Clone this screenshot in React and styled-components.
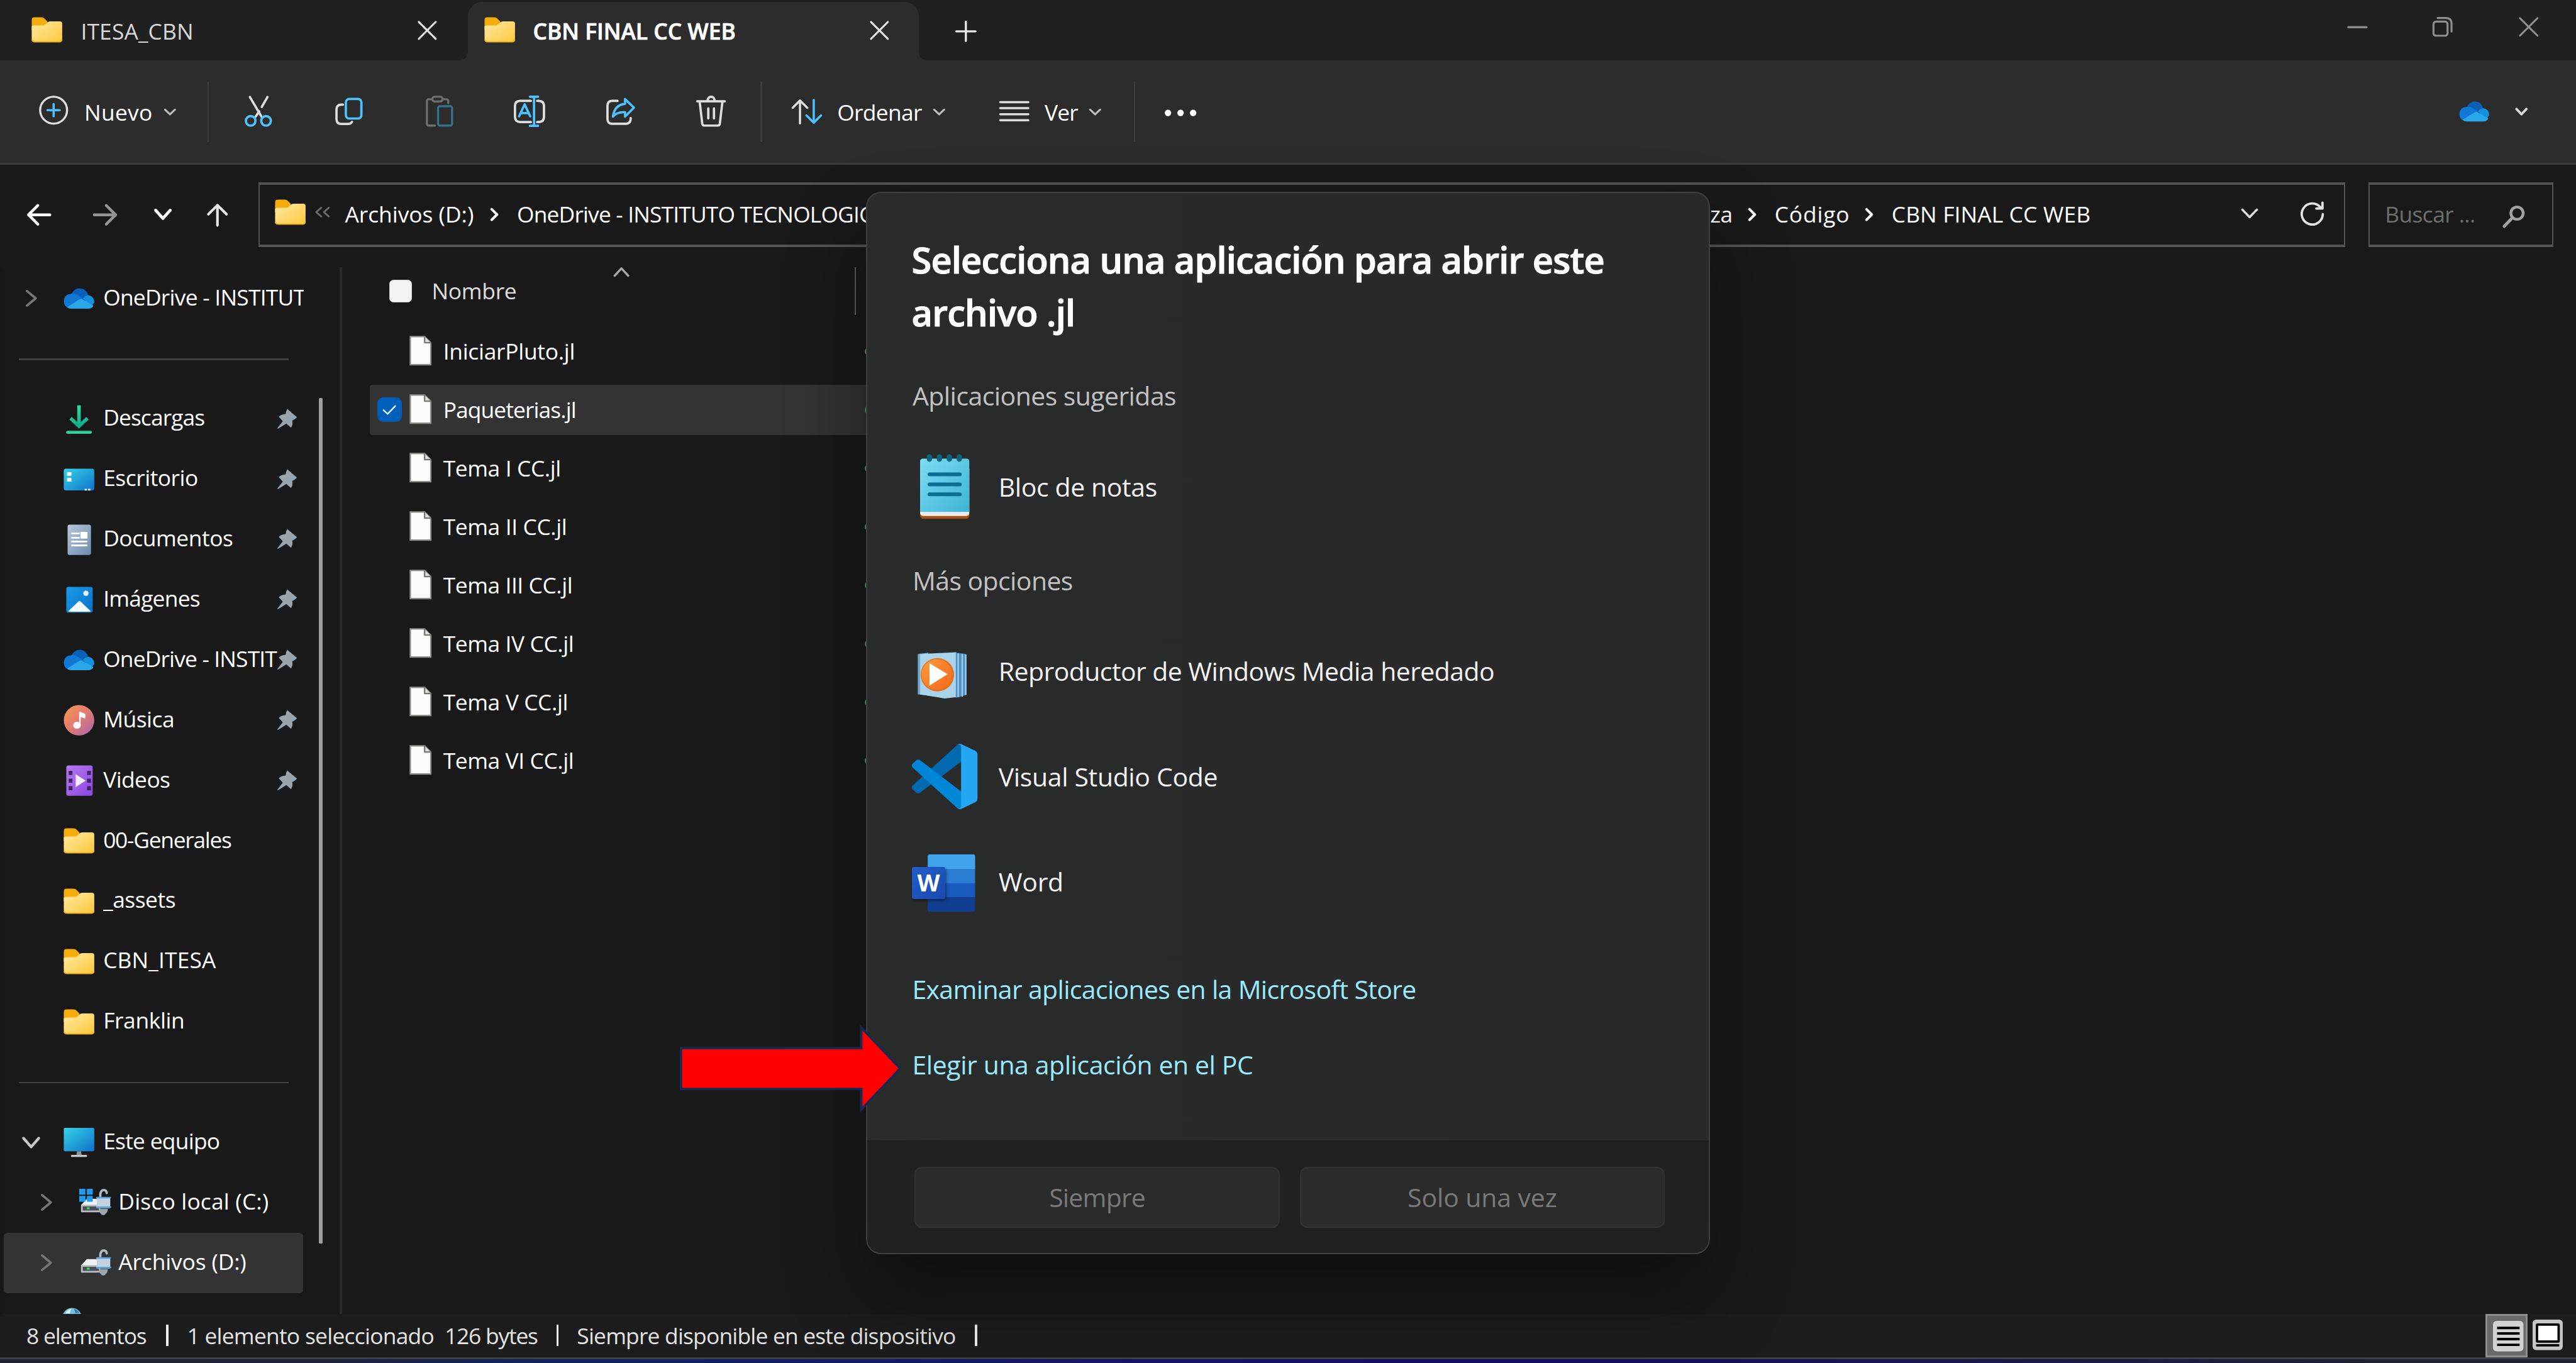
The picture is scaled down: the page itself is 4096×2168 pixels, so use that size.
import React from 'react';
import styled, { createGlobalStyle, css } from 'styled-components';

/* 1rem = 100 design pixels of the 4400px wide layout */
const r = (n) => `${n / 100}rem`;

const GlobalStyle = createGlobalStyle`
  html { font-size: 93.0909px; }
  body { margin: 0; background: #191919; overflow: hidden; }
  *, *::before, *::after { box-sizing: border-box; }
`;

const Window = styled.div`
  position: relative;
  display: flex;
  flex-direction: column;
  width: 100vw;
  height: 100vh;
  overflow: hidden;
  background: #191919;
  color: #fff;
  font-family: "Open Sans", "Noto Sans", sans-serif;
`;

const Text = styled.span`
  flex: none;
  display: block;
  width: ${(p) => (p.$w ? r(p.$w) : 'auto')};
  margin-left: ${(p) => r(p.$ml || 0)};
  margin-top: ${(p) => r((p.$dy || 0) * 2)};
  font-size: ${(p) => r(p.$size || 38)};
  font-weight: ${(p) => p.$weight || 400};
  letter-spacing: ${(p) => r(p.$ls || 0)};
  line-height: 1.4;
  white-space: pre;
  color: ${(p) => p.$color || '#fff'};
`;

const StrongText = styled(Text)`
  font-weight: 600;
  -webkit-text-stroke: ${r(0.8)} currentColor;
`;

const Svg = styled.svg`
  flex: none;
  display: block;
  width: ${(p) => r(p.$w)};
  height: ${(p) => r(p.$h)};
  margin-left: ${(p) => r(p.$ml || 0)};
  margin-top: ${(p) => r((p.$dy || 0) * 2)};
  overflow: visible;
  fill: none;
  stroke-linecap: round;
  stroke-linejoin: round;
`;

const Icon = ({ w, h, ml, dy, children }) => (
  <Svg $w={w} $h={h} $ml={ml} $dy={dy} viewBox={`0 0 ${w} ${h}`}>{children}</Svg>
);

/* ---------- shared glyphs ---------- */

const Folder = (p) => (
  <Icon w={53} h={44} {...p}>
    <path d="M0.5 5Q0.5 0.5 5 0.5H17Q20 0.5 22 2.5L27 7.5V22H0.5Z" fill="#f5ad0c" />
    <path d="M0.5 17Q0.5 14.5 4 14.5H19Q22 14.5 24 12.5L27 9.5Q29 7.5 32 7.5H48.5Q52.5 7.5 52.5 11.5V38Q52.5 43 48 43H5Q0.5 43 0.5 38Z" fill="url(#folderFace)" />
    <path d="M1 39.5Q2 42.5 5.500 42.500H48Q51 42.500 52 39.500" stroke="#eeaa1d" strokeWidth="2" />
  </Icon>
);

const Cloud = ({ w = 53, h = 36, ...p }) => (
  <Svg $w={w} $h={h} $ml={p.ml} $dy={p.dy} viewBox="0 0 53 36" preserveAspectRatio="none">
    <path d="M13 11Q18 0.5 28 0.500Q38 0.500 42 12L36 20L20 14Z" fill="#0a5fb8" />
    <path d="M13 10Q20 8.500 26 13.500L34 19L8 34Q0.500 31 0.500 22.500Q1 11 13 10Z" fill="#0f78d4" />
    <path d="M33 18Q37 12.500 43 12.500Q52.500 14 52.500 25L47 32Z" fill="#1490df" />
    <path d="M6 33L27 19.500Q30 18 33 19.500L51 30Q49 35.500 42 35.500H13Q9 35.500 6 33Z" fill="#28a8ea" />
  </Svg>
);

const Close = ({ s = 33, color = '#e4e4e4', ...p }) => (
  <Icon w={s} h={s} {...p}>
    <path d={`M2 2L${s - 2} ${s - 2}M${s - 2} 2L2 ${s - 2}`} stroke={color} strokeWidth="3.200" />
  </Icon>
);

const ChevronDown = ({ w = 20, h = 11, color = '#bdbdbd', sw = 3.4, ...p }) => (
  <Icon w={w} h={h} {...p}>
    <path d={`M1.500 1.500L${w / 2} ${h - 1.5}L${w - 1.5} 1.500`} stroke={color} strokeWidth={sw} />
  </Icon>
);

const ChevronRight = ({ w = 13, h = 22, color = '#fff', sw = 4.4, ...p }) => (
  <Icon w={w} h={h} {...p}>
    <path d={`M2 2L${w - 2} ${h / 2}L2 ${h - 2}`} stroke={color} strokeWidth={sw} />
  </Icon>
);

/* ---------- tab bar ---------- */

const TabBar = styled.div`
  flex: none;
  display: flex;
  align-items: stretch;
  height: ${r(103)};
  background: #202020;
`;

const Tab = styled.div`
  position: relative;
  flex: none;
  display: flex;
  align-items: center;
  width: ${(p) => r(p.$w)};
  padding-left: ${(p) => r(p.$pl)};
  ${(p) => p.$active && css`
    margin-top: ${r(3)};
    padding-bottom: ${r(3)};
    background: #2c2c2c;
    border-radius: ${r(25)} ${r(25)} 0 0;
    &::before, &::after {
      content: "";
      position: absolute;
      bottom: 0;
      width: ${r(14)};
      height: ${r(14)};
    }
    &::before {
      left: ${r(-14)};
      background: radial-gradient(circle at 0 0, transparent 70%, #2c2c2c 72%);
    }
    &::after {
      right: ${r(-14)};
      background: radial-gradient(circle at 100% 0, transparent 70%, #2c2c2c 72%);
    }
  `}
`;

const NewTab = styled.div`
  display: flex;
  align-items: center;
  margin-left: ${r(64)};
`;

const Controls = styled.div`
  display: flex;
  align-items: center;
  margin-left: auto;
  padding-right: ${r(63.5)};
  padding-bottom: ${r(12)};
`;

/* ---------- command bar ---------- */

const Toolbar = styled.div`
  flex: none;
  display: flex;
  align-items: center;
  height: ${r(178)};
  background: #2c2c2c;
  border-bottom: ${r(4)} solid #3b3b3b;
`;

const ToolButton = styled.div`
  flex: none;
  display: flex;
  align-items: center;
  justify-content: center;
  width: ${r(154.5)};
`;

const ToolGroup = styled.div`
  flex: none;
  display: flex;
  align-items: center;
  width: ${(p) => r(p.$w)};
  padding-left: ${(p) => r(p.$pl)};
`;

const ToolSeparator = styled.div`
  flex: none;
  width: ${r(3)};
  height: ${r(102)};
  background: #3e3e3e;
`;

const Account = styled.div`
  display: flex;
  align-items: center;
  margin-left: auto;
  padding-right: ${r(83.5)};
`;

const W = '#dedede';
const B = '#4cc2ff';

const ToolIcons = [
  <g key="cut" strokeWidth="4">
    <path d="M12.200 2.500L32 36M42.200 2.500L32.500 19.500M28 27L22 36" stroke={W} />
    <circle cx="13.500" cy="43.300" r="8.200" stroke={B} />
    <circle cx="39.800" cy="43.300" r="8.200" stroke={B} />
  </g>,
  <g key="copy" strokeWidth="4">
    <path d="M17.500 15.500H15Q6.500 15.500 6.500 24V40Q6.500 48.500 15 48.500H26Q31 48.500 33 45" stroke={W} />
    <rect x="22.500" y="5.700" width="26.500" height="33.500" rx="6" stroke={B} />
  </g>,
  <g key="paste" strokeWidth="3.600">
    <path d="M15 6.300H9.500Q6.300 6.300 6.300 9.500V48Q6.300 51.300 9.500 51.300H20M33 6.300H39Q42.700 6.300 42.700 9.500V13" stroke="#6e6e6e" />
    <rect x="15.500" y="2" width="17.500" height="8" rx="4" stroke="#6e6e6e" />
    <rect x="25.300" y="18.300" width="24" height="33" rx="3" stroke="#35708f" />
  </g>,
  <g key="rename" strokeWidth="4">
    <path d="M29 9H11Q2 9 2 18V36Q2 45.300 11 45.300H29M40 9H42Q51.500 9 51.500 18V36Q51.500 45.300 42 45.300H40" stroke={W} />
    <path d="M34.500 2V51.700M27.500 2H41.500M27.500 51.700H41.500" stroke={B} />
    <path d="M9 35.500L18.500 15L28 35.500M12.500 30H24.500" stroke={B} />
  </g>,
  <g key="share" strokeWidth="4">
    <path d="M22.500 9H13.500Q5.300 9 5.300 17.500V40Q5.300 48.300 13.500 48.300H37Q45 48.300 45 38.500" stroke={W} />
    <path d="M35.300 6V14Q17 16 14.700 36Q22 27.500 35.300 28.500V36L50.500 20.700Z" stroke={B} />
  </g>,
  <g key="trash" strokeWidth="4">
    <path d="M4 9.700H51M21.500 9Q22.500 2 27.600 2Q32.700 2 33.700 9M8 10L12.500 48Q13 51.300 16 51.300H39Q42 51.300 42.500 48L47 10M22.800 22V39M32.500 22V39" stroke={W} />
  </g>,
];

/* ---------- address row ---------- */

const AddressRow = styled.div`
  flex: none;
  display: flex;
  align-items: flex-start;
  height: ${r(176)};
  padding-top: ${r(31)};
`;

const NavButtons = styled.div`
  flex: none;
  display: flex;
  align-items: center;
  width: ${r(442)};
  height: ${r(110)};
  padding-left: ${r(46)};
`;

const Field = styled.div`
  flex: none;
  display: flex;
  align-items: center;
  width: ${(p) => r(p.$w)};
  height: ${r(110)};
  margin-right: ${(p) => r(p.$mr || 0)};
  border: solid #535353;
  border-width: ${r(5)} ${r(3)};
`;

const Trail = styled.div`
  flex: none;
  display: flex;
  align-items: center;
  justify-content: space-between;
  width: ${r(2074)};
  margin-left: ${r(32)};
`;

/* ---------- body ---------- */

const Body = styled.div`
  flex: 1;
  display: flex;
  min-height: 0;
`;

const Sidebar = styled.div`
  flex: none;
  display: flex;
  width: ${r(584)};
  border-left: ${r(6)} solid #161616;
  border-right: ${r(5)} solid #2b2b2b;
`;

const NavList = styled.div`
  width: ${r(514)};
  padding-top: ${r(1.5)};
  overflow: hidden;
`;

const NavRow = styled.div`
  display: flex;
  align-items: center;
  height: ${r(103)};
  margin: 0 ${r(2)} 0 ${r(1.5)};
  padding-left: ${(p) => r(p.$depth ? 26 : 0)};
  border-radius: ${r(6)};
  background: ${(p) => (p.$selected ? '#333' : 'transparent')};
`;

const Expander = styled.div`
  flex: none;
  display: flex;
  justify-content: center;
  width: ${r(102)};
  padding-right: ${r(9)};
`;

const IconSlot = styled.div`
  flex: none;
  display: flex;
  justify-content: center;
  width: ${r(53)};
  margin-right: ${r(14.5)};
`;

const NavLabel = styled(Text)`
  width: ${r(290)};
  margin-top: ${r(-5)};
`;

const NavRule = styled.div`
  display: flex;
  align-items: center;
  height: ${r(103)};
  padding: ${r(2)} ${r(26)} 0 ${r(27)};
  &::after {
    content: "";
    flex: 1;
    height: ${r(2.5)};
    background: #404040;
  }
`;

const ScrollThumb = styled.div`
  width: ${r(6.5)};
  height: ${r(1445)};
  margin: ${r(223)} 0 0 ${r(25)};
  border-radius: ${r(2)};
  background: #9f9f9f;
`;

const Pin = () => (
  <Icon w={35} h={35} ml={6.5} dy={-0.5}>
    <path d="M18 0.500L34.500 14.500Q33 17 26.500 20.500Q28 27 24.500 32.500L16.500 25.500L2 34.500L1 33.500L10.500 21.500L3.500 14Q8 9.500 15 9.500Q16 4 18 0.500Z" fill="#9aa4ac" />
  </Icon>
);

const Drive = ({ system }) => (
  <Icon w={53} h={46}>
    {system && <path d="M0 0H10.500V10H0ZM13 0H23V10H13Z" fill="#1e9df1" />}
    <path d="M13 17H36V28H3Z" fill="#f1f1f3" />
    {system && <path d="M0 12H10.500V22H0ZM13 12H23V22H13Z" fill="#1e9df1" />}
    <path d="M3 27H36V39Q36 40 35 40H4Q3 40 3 39Z" fill="#b9bcc0" />
    <path d="M6 30H34V37H6Z" fill="#4b4f54" />
    <rect x="13" y="31.500" width="4.500" height="3.500" fill="#2ee65c" />
    <path d="M36 15V9Q37 2 42 2Q46 2 47 7" stroke="#b2b7bd" strokeWidth="4" />
    <rect x="30" y="14" width="23" height="19" rx="1.500" fill="#c3d2de" />
    <path d="M30 15H53M30 31.500H53" stroke="#53a4e2" strokeWidth="2.600" />
    <path d="M33 34H49Q48 43 41 45Q34 43 33 34Z" fill="#9da7b1" />
  </Icon>
);

const navIcons = {
  onedrive: <Cloud />,
  folder: <Folder />,
  downloads: (
    <Icon w={40} h={52}>
      <path d="M20 3V37M5.500 25L20 38.500L34.500 25" stroke="url(#teal)" strokeWidth="6" strokeLinecap="butt" strokeLinejoin="miter" />
      <path d="M0.500 49H39.500" stroke="#2fd39a" strokeWidth="5" />
    </Icon>
  ),
  desktop: (
    <Icon w={53} h={38}>
      <rect x="0.500" y="0.500" width="52" height="37" rx="3.500" fill="url(#cyanBlue)" />
      <path d="M6 6.500H13.500V12.500H6ZM6 16.500H13.500V22.500H6Z" fill="#fff" />
      <path d="M36 35H40V38H36ZM42 35H46V38H42Z" fill="#e9f6ff" />
    </Icon>
  ),
  documents: (
    <Icon w={41} h={53}>
      <rect x="0.500" y="0.500" width="40" height="52" rx="3.500" fill="url(#slate)" />
      <path d="M8 15.500H20M8 23H20M8 29.500H33M8 36H33" stroke="#fff" strokeWidth="3" />
      <rect x="22.500" y="13" width="12" height="11.500" rx="1" fill="#fff" />
    </Icon>
  ),
  pictures: (
    <Icon w={46} h={45}>
      <rect x="0.500" y="0.500" width="45" height="44" rx="3.500" fill="url(#azure)" />
      <path d="M4 42L20 26.500Q23 23.500 26 26.500L42 42Q42 43 40 43H6Q4 43 4 42Z" fill="#f4fbff" />
      <circle cx="34" cy="11.500" r="4.500" fill="#e7f5ff" />
    </Icon>
  ),
  music: (
    <Icon w={53} h={53}>
      <circle cx="26.500" cy="26.500" r="26" fill="url(#coral)" />
      <path d="M28 34V13L36 16.500V22L28 19" fill="#fff" stroke="#fff" strokeWidth="2.500" />
      <ellipse cx="23" cy="35" rx="6.500" ry="6" fill="#fff" />
    </Icon>
  ),
  videos: (
    <Icon w={46} h={53}>
      <rect x="0.500" y="0.500" width="45" height="52" rx="3.500" fill="url(#violet)" />
      <path d="M4.500 10H11V17H4.500ZM4.500 23H11V30H4.500ZM4.500 36H11V43H4.500ZM36 10H42.500V17H36ZM36 23H42.500V30H36ZM36 36H42.500V43H36Z" fill="#3f2463" />
      <path d="M16.500 15.500L33.500 26.500L16.500 37.500Z" fill="#f3ecff" />
    </Icon>
  ),
  pc: (
    <Icon w={53} h={50}>
      <path d="M23 40H30L31 47H22Z" fill="#8b949c" />
      <rect x="0.500" y="0" width="52" height="40" rx="2" fill="url(#cyanBlue)" />
      <path d="M14.500 48H38.500" stroke="#c4cacf" strokeWidth="3.500" />
    </Icon>
  ),
  driveC: <Drive system />,
  driveD: <Drive />,
  network: (
    <Icon w={53} h={53}>
      <circle cx="14.500" cy="17" r="16.500" fill="#6fbde0" />
      <path d="M3 9Q8 2 14 1.500Q11 6 11 10Z" fill="#d8f1fb" />
      <path d="M18 1.500Q24 4 27 9H20Z" fill="#2f7fae" />
    </Icon>
  ),
};

const navItems = [
  { icon: 'onedrive', label: 'OneDrive - INSTITUT', ls: -0.8, expand: 'right' },
  null,
  { icon: 'downloads', label: 'Descargas', ls: -0.95, pin: true },
  { icon: 'desktop', label: 'Escritorio', ls: -0.5, pin: true },
  { icon: 'documents', label: 'Documentos', ls: -0.46, pin: true },
  { icon: 'pictures', label: 'Imágenes', ls: -0.8, pin: true },
  { icon: 'onedrive', label: 'OneDrive - INSTIT', ls: -0.9, pin: true },
  { icon: 'music', label: 'Música', ls: -0.5, pin: true },
  { icon: 'videos', label: 'Videos', ls: -0.6, pin: true },
  { icon: 'folder', label: '00-Generales', ls: -1.35 },
  { icon: 'folder', label: '_assets', ls: -0.5 },
  { icon: 'folder', label: 'CBN_ITESA', ls: 0.17 },
  { icon: 'folder', label: 'Franklin', ls: -0.39 },
  null,
  { icon: 'pc', label: 'Este equipo', ls: -0.77, expand: 'down' },
  { icon: 'driveC', label: 'Disco local (C:)', ls: 0.2, expand: 'right', depth: 1 },
  { icon: 'driveD', label: 'Archivos (D:)', ls: -0.15, expand: 'right', depth: 1, selected: true },
  { icon: 'network' },
];

const NavItem = ({ icon, label, ls, pin, expand, depth, selected }) => (
  <NavRow $depth={depth} $selected={selected}>
    <Expander>
      {expand === 'right' && <ChevronRight w={19} h={29} color="#757575" sw={4} />}
      {expand === 'down' && <ChevronDown w={29} h={18} color="#c8c8c8" sw={4.6} />}
    </Expander>
    <IconSlot>{navIcons[icon]}</IconSlot>
    {label && <NavLabel $ls={ls}>{label}</NavLabel>}
    {pin && <Pin />}
  </NavRow>
);

/* ---------- file list ---------- */

const Files = styled.div`
  flex: 1;
  display: flex;
  flex-direction: column;
  padding-left: ${r(48)};
`;

const HeaderRow = styled.div`
  display: flex;
  align-items: flex-start;
  height: ${r(93)};
  margin-bottom: ${r(7.5)};
  padding-left: ${r(33)};
`;

const HeaderCheck = styled.div`
  flex: none;
  width: ${r(39)};
  height: ${r(39)};
  margin-top: ${r(21)};
  border-radius: ${r(7)};
  background: #f3f3f3;
  border: ${r(2)} solid #d0d0d0;
`;

const ColumnEdge = styled.div`
  width: ${r(3)};
  height: ${r(81)};
  margin-left: ${r(385)};
  background: #5c5c5c;
`;

const FileRow = styled.div`
  display: flex;
  align-items: center;
  width: ${r(1400)};
  height: ${r(86)};
  margin-bottom: ${r(13.93)};
  border-radius: ${r(5)};
  background: ${(p) => (p.$selected ? '#333' : 'transparent')};
`;

const CheckSlot = styled.div`
  flex: none;
  width: ${r(67)};
  padding-left: ${r(12.5)};
`;

const CheckBox = styled.div`
  display: flex;
  align-items: center;
  justify-content: center;
  width: ${r(42)};
  height: ${r(42)};
  border-radius: ${r(10)};
  background: #005fb8;
`;

const SyncMark = styled.span`
  width: ${r(30)};
  height: ${r(16)};
  margin-left: ${r(520.5)};
  border-radius: ${r(8)};
  border: ${r(3)} solid #4b9a55;
`;

const FilePage = () => (
  <Icon w={38} h={51} dy={-1}>
    <path d="M1.500 1.500H26L36.500 12V49.500H1.500Z" fill="#fcfcfc" stroke="#8f8f8a" strokeWidth="2.400" strokeLinejoin="miter" />
    <path d="M26 1.500V12H36.500" fill="#dedede" stroke="#77776f" strokeWidth="2.400" />
  </Icon>
);

const files = [
  ['IniciarPluto.jl', -0.28],
  ['Paqueterias.jl', -0.95],
  ['Tema I CC.jl', -0.4],
  ['Tema II CC.jl', -0.4],
  ['Tema III CC.jl', -0.45],
  ['Tema IV CC.jl', -0.42],
  ['Tema V CC.jl', -0.4],
  ['Tema VI CC.jl', -0.42],
];

/* ---------- status bar ---------- */

const StatusBar = styled.div`
  flex: none;
  display: flex;
  align-items: center;
  height: ${r(74)};
  padding-left: ${r(45)};
  background: #1c1c1c;
`;

const StatusRule = styled.div`
  flex: none;
  width: ${r(3.5)};
  height: ${r(37)};
  background: #f0f0f0;
`;

const ViewSwitch = styled.div`
  display: flex;
  align-items: flex-start;
  height: 100%;
  margin-left: auto;
  padding-right: ${r(22.5)};
`;

const ActiveView = styled.div`
  display: flex;
  width: ${r(72)};
  height: ${r(74)};
  margin-right: ${r(9)};
  padding: ${r(9)} 0 0 ${r(10)};
  background: #6a6a6a;
  border: ${r(3.5)} solid #8e8e8e;
`;

const BottomEdge = styled.div`
  flex: none;
  height: ${r(10)};
  border-top: ${r(4)} solid #3b3e47;
  background: linear-gradient(90deg, #1b2330 0, #1a2438 12%, #10235a 20%, #101a66 36%, #120f62 60%, #141a48 78%, #1a2233 92%);
`;

/* ---------- dialog ---------- */

const Dialog = styled.div`
  position: absolute;
  left: ${r(1479)};
  top: ${r(328)};
  display: flex;
  flex-direction: column;
  width: ${r(1442)};
  height: ${r(1815)};
  border: ${r(3)} solid #3f3f3f;
  border-radius: ${r(26)};
  background: #292a2a;
  box-shadow: 0 ${r(70)} ${r(130)} rgba(0, 0, 0, 0.42);
  overflow: hidden;
`;

const DialogBody = styled.div`
  flex: 1;
  padding: ${r(68)} ${r(78)} 0;
  background: linear-gradient(90deg, #292c2a 0, #292a2a 22%, #2a2929 100%);
`;

const Title = styled.h1`
  margin: 0 0 ${r(68)} ${r(-2)};
  width: ${r(1290)};
  font-size: ${r(62)};
  font-weight: 600;
  line-height: ${r(90.5)};
  letter-spacing: ${r(-0.9)};
  white-space: pre-line;
  -webkit-text-stroke: ${r(1.2)} currentColor;
`;

const GroupLabel = styled(Text)`
  height: ${r(60)};
  margin-bottom: ${r(34.5)};
  margin-left: ${r(-0.5)};
  line-height: ${r(60)};
`;

const AppList = styled.div`
  display: flex;
  flex-direction: column;
  margin: 0 0 ${(p) => r(p.$gap)} ${r(-2)};
`;

const AppRow = styled.div`
  display: flex;
  align-items: center;
  height: ${r(179.9)};
`;

const LinkRow = styled(Text)`
  height: ${r(129)};
  line-height: ${r(129)};
  margin-left: ${r(-1)};
`;

const DialogFooter = styled.div`
  display: flex;
  gap: ${r(34)};
  height: ${r(192)};
  padding: ${r(43)} ${r(75)} 0 ${r(81)};
  background: #212121;
  border-top: ${r(3)} solid #1d1d1d;
`;

const DialogButton = styled.div`
  flex: 1;
  display: flex;
  align-items: center;
  justify-content: center;
  height: ${r(104)};
  border: ${r(3)} solid #323232;
  border-radius: ${r(13)};
  background: #2b2b2b;
`;

const Pointer = styled.svg`
  position: absolute;
  left: ${r(1160)};
  top: ${r(1748)};
  width: ${r(380)};
  height: ${r(156)};
`;

const Notepad = () => (
  <Icon w={112} h={112}>
    <rect x="14" y="20" width="84" height="91" rx="6" fill="#a84f12" />
    <rect x="14" y="20" width="84" height="86" rx="5" fill="#ececec" />
    <path d="M14 13Q14 8 19 8H93Q98 8 98 13V99H14Z" fill="url(#notepad)" />
    <path d="M30 35H82M30 52H82M30 69H82" stroke="#0b6f92" strokeWidth="6.500" />
    <path d="M30 5V9M47 5V9M64 5V9M81 5V9" stroke="#0b6480" strokeWidth="9" />
  </Icon>
);

const MediaPlayer = () => (
  <Icon w={112} h={112}>
    <path d="M10 26L28 24V97L10 95Z" fill="#6fa9d0" />
    <path d="M14 26L75 23L83 28V99L56 102L14 95Z" fill="#a9d3ea" />
    <path d="M75 24L93 26V96L75 101Z" fill="#4d93c6" />
    <path d="M79 26V99M86 27V98M92 28V95" stroke="#9ccdea" strokeWidth="2.500" />
    <circle cx="43.500" cy="61.500" r="28.500" fill="#e5721a" />
    <circle cx="42.500" cy="61" r="26" fill="url(#orange)" />
    <path d="M30 42L61 60.500L30 80Z" fill="#fff" />
  </Icon>
);

const VsCode = () => (
  <Svg $w={112} $h={112} viewBox="0 0 100 100">
    <path fill="#0069b0" d="M96.461 10.796L75.857.876C73.472-.273 70.622.212 68.75 2.083L1.299 63.583C-.516 65.237-.514 68.094 1.303 69.745L6.813 74.754C8.298 76.104 10.535 76.204 12.134 74.99L93.361 13.37C96.086 11.303 100 13.246 100 16.667V16.427C100 14.027 98.625 11.838 96.461 10.796Z" />
    <path fill="#0086d6" d="M96.461 89.204L75.857 99.124C73.472 100.273 70.622 99.788 68.75 97.917L1.299 36.417C-.516 34.763-.514 31.906 1.303 30.255L6.813 25.246C8.298 23.896 10.535 23.796 12.134 25.01L93.361 86.63C96.086 88.697 100 86.754 100 83.333V83.573C100 85.974 98.625 88.162 96.461 89.204Z" />
    <path fill="#24a6f2" d="M75.858 99.126C73.472 100.274 70.622 99.789 68.75 97.917C71.056 100.223 75 98.59 75 95.328V4.672C75 1.41 71.056-.223 68.75 2.083C70.622.211 73.472-.274 75.858.874L96.459 10.781C98.623 11.822 100 14.011 100 16.413V83.587C100 85.989 98.623 88.179 96.459 89.22L75.858 99.126Z" />
  </Svg>
);

const WordTile = styled.div`
  position: absolute;
  left: ${r(1)};
  top: ${r(31)};
  display: flex;
  align-items: center;
  justify-content: center;
  width: ${r(56)};
  height: ${r(54)};
  border-radius: ${r(4)};
  background: linear-gradient(135deg, #1f5ecb, #1a49ae);
  box-shadow: ${r(2)} ${r(3)} ${r(5)} rgba(0, 0, 0, 0.4);
`;

const WordFrame = styled.div`
  position: relative;
  flex: none;
  width: ${r(112)};
`;

const Word = () => (
  <WordFrame>
    <Icon w={112} h={112}>
      <path d="M27 12Q27 8.500 30 8.500H105Q108 8.500 108 12V34H27Z" fill="#41a5ee" />
      <path d="M27 34H108V58H27Z" fill="#2b7cd3" />
      <path d="M27 58H108V82H27Z" fill="#185abd" />
      <path d="M27 82H108V103Q108 106.500 105 106.500H30Q27 106.500 27 103Z" fill="#103f91" />
    </Icon>
    <WordTile><Text $size={40} $weight={700}>W</Text></WordTile>
  </WordFrame>
);

const moreApps = [
  [MediaPlayer, 'Reproductor de Windows Media heredado', -0.58],
  [VsCode, 'Visual Studio Code', -0.36],
  [Word, 'Word', -0.3],
];

const AppOption = ({ glyph: Glyph, label, ls }) => (
  <AppRow>
    <Glyph />
    <Text $size={44} $ml={36.5} $dy={0.5} $ls={ls} $color="#f2f2f2">{label}</Text>
  </AppRow>
);

const Gradient = ({ id, from, to, mid }) => (
  <linearGradient id={id} x1="0" y1="0" x2="1" y2="1">
    <stop offset="0" stopColor={from} />
    {mid && <stop offset="0.5" stopColor={mid} />}
    <stop offset="1" stopColor={to} />
  </linearGradient>
);

const Defs = styled.svg`
  position: absolute;
  width: 0;
  height: 0;
`;

export default function App() {
  return (
    <Window>
      <GlobalStyle />
      <Defs>
        <defs>
          <Gradient id="folderFace" from="#ffe9a6" to="#ffc83a" />
          <linearGradient id="teal" gradientUnits="userSpaceOnUse" x1="20" y1="0" x2="20" y2="40">
            <stop offset="0" stopColor="#34e0a0" />
            <stop offset="1" stopColor="#12a88f" />
          </linearGradient>
          <Gradient id="cyanBlue" from="#35d3e6" to="#0f72cc" />
          <Gradient id="slate" from="#b6c8da" to="#6f8cae" />
          <Gradient id="azure" from="#1a9be6" to="#0a72cc" />
          <Gradient id="coral" from="#f79a52" mid="#e27a72" to="#a566b0" />
          <Gradient id="violet" from="#b77af0" to="#8a45e0" />
          <Gradient id="notepad" from="#7fdcf4" to="#3cb4d4" />
          <Gradient id="orange" from="#ff9c3c" to="#f4671c" />
        </defs>
      </Defs>

      <TabBar>
        <Tab $w={799} $pl={54}>
          <Folder />
          <Text $ml={31} $w={575} $ls={0.17} $dy={1.8} $color="#d8d8d8">ITESA_CBN</Text>
          <Close />
        </Tab>
        <Tab $w={770} $pl={28} $active>
          <Folder />
          <StrongText $ml={30.5} $w={575.5} $dy={1.8}>CBN FINAL CC WEB</StrongText>
          <Close />
        </Tab>
        <NewTab>
          <Icon w={34} h={34} dy={1.5}>
            <path d="M17 0.500V33.500M0.500 17H33.500" stroke="#e8e8e8" strokeWidth="3.600" />
          </Icon>
        </NewTab>
        <Controls>
          <Icon w={33} h={34}><path d="M1 17.500H32" stroke="#8a8a8a" strokeWidth="3.600" /></Icon>
          <Icon w={34} h={34} ml={111}>
            <g stroke="#8f8f8f" strokeWidth="3.400">
              <rect x="1.500" y="8" width="24" height="24" rx="4" />
              <path d="M8.500 1.700H23Q32.300 1.700 32.300 11V25" />
            </g>
          </Icon>
          <Close s={34} color="#8f8f8f" ml={114} />
        </Controls>
      </TabBar>

      <Toolbar>
        <ToolGroup $w={354} $pl={67}>
          <Icon w={50} h={50} dy={-2}>
            <circle cx="25" cy="25" r="23" stroke={W} strokeWidth="3.600" />
            <path d="M25 14.500V35.500M14.500 25H35.500" stroke={B} strokeWidth="3.800" />
          </Icon>
          <Text $ml={27} $w={136} $ls={0.3} $dy={2}>Nuevo</Text>
          <ChevronDown dy={0.5} />
        </ToolGroup>
        <ToolSeparator />
        <ToolGroup $w={941.5} $pl={7}>
          {ToolIcons.map((g, i) => (
            <ToolButton key={i}><Icon w={54} h={54}>{g}</Icon></ToolButton>
          ))}
        </ToolGroup>
        <ToolSeparator />
        <ToolGroup $w={635} $pl={50.5}>
          <Icon w={52} h={42}>
            <path d="M14 41V2M1.500 14.500L14 2L26.500 14.500" stroke={W} strokeWidth="3.800" />
            <path d="M37.500 1V40M25 27.500L37.500 40L50 27.500" stroke={B} strokeWidth="3.800" />
          </Icon>
          <Text $ml={26} $w={164} $ls={-0.68} $dy={2}>Ordenar</Text>
          <ChevronDown dy={0.5} />
          <Icon w={51} h={34} ml={93}>
            <path d="M1.500 1.500H49.500M1.500 11.800H49.500M1.500 22.200H49.500M1.500 32.500H49.500" stroke={W} strokeWidth="3.800" />
          </Icon>
          <Text $ml={26.5} $w={76.5} $ls={-1} $dy={2}>Ver</Text>
          <ChevronDown dy={0.5} />
        </ToolGroup>
        <ToolSeparator />
        <Icon w={54} h={12} ml={50} dy={2.5}>
          <g fill="#fff"><circle cx="5.500" cy="6" r="5.500" /><circle cx="27" cy="6" r="5.500" /><circle cx="48.500" cy="6" r="5.500" /></g>
        </Icon>
        <Account>
          <Cloud w={52} h={35} />
          <ChevronDown ml={44} h={12} color="#d8d8d8" sw={4.2} />
        </Account>
      </Toolbar>

      <AddressRow>
        <NavButtons>
          <Icon w={41} h={38}>
            <path d="M2.500 19H39M18.500 3L2.500 19L18.500 35" stroke="#fff" strokeWidth="4.800" />
          </Icon>
          <Icon w={41} h={38} ml={72}>
            <path d="M2 19H38.500M22.500 3L38.500 19L22.500 35" stroke="#959595" strokeWidth="4.800" />
          </Icon>
          <ChevronDown w={28} h={17} ml={64.5} color="#fff" sw={5} dy={-0.5} />
          <Icon w={36} h={38} ml={60.500}>
            <path d="M18 37V2.500M2.500 18L18 2.500L33.500 18" stroke="#e8e8e8" strokeWidth="4.400" />
          </Icon>
        </NavButtons>
        <Field $w={3564} $mr={40}>
          <Folder ml={25} dy={-4} />
          <Icon w={26} h={18} ml={16} dy={-5}>
            <path d="M10.500 1.500L2 9L10.500 16.500M23.500 1.500L15 9L23.500 16.500" stroke="#6a6a6a" strokeWidth="3" />
          </Icon>
          <Text $ml={25} $w={249} $ls={-0.02} $dy={-1}>Archivos (D:)</Text>
          <ChevronRight />
          <Trail>
            <Text $ls={-0.9} $dy={-1}>OneDrive - INSTITUTO TECNOLOGICO</Text>
            <Text $w={36} $ls={-0.4} $dy={-1}>za</Text>
          </Trail>
          <ChevronRight ml={29} />
          <Text $ml={32} $w={155} $ls={0.95} $dy={-1}>Código</Text>
          <ChevronRight />
          <Text $ml={32} $w={597} $ls={0.12} $dy={-1}>CBN FINAL CC WEB</Text>
          <ChevronDown w={28} h={16} color="#e0e0e0" sw={3.800} dy={-2} />
          <Icon w={40} h={41} ml={73} dy={-2}>
            <path d="M34 9.500A18 18 0 1 0 38 21M37.500 1.500V11.500H27" stroke="#e4e4e4" strokeWidth="4" />
          </Icon>
        </Field>
        <Field $w={315}>
          <Text $ml={25.5} $w={201} $ls={-0.63} $dy={-1} $color="#6e6e6e">Buscar ...</Text>
          <Icon w={38} h={38} dy={3}>
            <circle cx="25" cy="13" r="10.500" stroke="#a2a2a2" strokeWidth="4.800" />
            <path d="M17 21L3 35.500" stroke="#a2a2a2" strokeWidth="5.200" />
          </Icon>
        </Field>
      </AddressRow>

      <Body>
        <Sidebar>
          <NavList>
            {navItems.map((item, i) => (item ? <NavItem key={i} {...item} /> : <NavRule key={i} />))}
          </NavList>
          <ScrollThumb />
        </Sidebar>
        <Files>
          <HeaderRow>
            <HeaderCheck />
            <Text $ml={33.5} $w={311} $ls={-0.29} $dy={7} $color="#dedede">Nombre</Text>
            <Icon w={26} h={16}><path d="M1.500 14.500L13 2L24.500 14.500" stroke="#a8a8a8" strokeWidth="3.600" /></Icon>
            <ColumnEdge />
          </HeaderRow>
          {files.map(([name, ls], i) => (
            <FileRow key={name} $selected={i === 1}>
              <CheckSlot>
                {i === 1 && (
                  <CheckBox>
                    <Icon w={24} h={17}><path d="M2 9L9 15.500L22 2" stroke="#d9ecff" strokeWidth="2.800" /></Icon>
                  </CheckBox>
                )}
              </CheckSlot>
              <FilePage />
              <Text $ml={20} $w={200} $dy={-0.5} $ls={ls}>{name}</Text>
              <SyncMark />
            </FileRow>
          ))}
        </Files>
      </Body>

      <StatusBar>
        <Text $w={239} $ls={-1.21} $color="#e4e4e4">8 elementos</Text>
        <StatusRule />
        <Text $ml={32} $w={440} $ls={-0.77} $color="#e4e4e4">1 elemento seleccionado</Text>
        <Text $w={191} $ls={-1.28} $color="#e4e4e4">126 bytes</Text>
        <StatusRule />
        <Text $ml={31.500} $w={680} $ls={-0.85} $color="#e4e4e4">Siempre disponible en este dispositivo</Text>
        <StatusRule />
        <ViewSwitch>
          <ActiveView>
            <Icon w={52} h={52}>
              <rect width="52" height="52" rx="6" fill="#d2d2d2" />
              <path d="M7 12H45.500M7 21.500H45.500M7 31.200H45.500M7 41H45.500" stroke="#000" strokeWidth="4.200" strokeLinecap="butt" />
            </Icon>
          </ActiveView>
          <Icon w={51.5} h={52} dy={4.7}>
            <rect width="51.500" height="52" rx="6" fill="#c6c6c6" />
            <rect x="7.500" y="8.500" width="37" height="29" rx="1" fill="#fff" stroke="#000" strokeWidth="4" />
            <path d="M6 44H45.500" stroke="#000" strokeWidth="4" strokeLinecap="butt" />
          </Icon>
        </ViewSwitch>
      </StatusBar>
      <BottomEdge />

      <Dialog>
        <DialogBody>
          <Title>{'Selecciona una aplicación para abrir este\narchivo .jl'}</Title>
          <GroupLabel $size={44} $ls={-0.58} $color="#c2c2c2">Aplicaciones sugeridas</GroupLabel>
          <AppList $gap={41}>
            <AppOption glyph={Notepad} label="Bloc de notas" ls={-0.4} />
          </AppList>
          <GroupLabel $size={44} $ls={-0.6} $color="#c2c2c2">Más opciones</GroupLabel>
          <AppList $gap={28.5}>
            {moreApps.map(([glyph, label, ls]) => <AppOption key={label} glyph={glyph} label={label} ls={ls} />)}
          </AppList>
          <LinkRow $size={44} $ls={-0.7} $color="#99ebff">Examinar aplicaciones en la Microsoft Store</LinkRow>
          <LinkRow $size={44} $ls={-0.43} $color="#99ebff">Elegir una aplicación en el PC</LinkRow>
        </DialogBody>
        <DialogFooter>
          <DialogButton><Text $size={44} $ls={-0.85} $color="#797979">Siempre</Text></DialogButton>
          <DialogButton><Text $size={44} $ls={-0.1} $color="#797979">Solo una vez</Text></DialogButton>
        </DialogFooter>
      </Dialog>

      <Pointer viewBox="0 0 380 156">
        <path d="M3 43H311V8L377.500 78L311 148V113H3Z" fill="#ff0000" stroke="#172a52" strokeWidth="4" />
      </Pointer>
    </Window>
  );
}
